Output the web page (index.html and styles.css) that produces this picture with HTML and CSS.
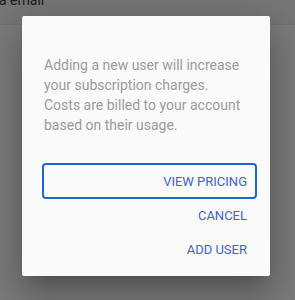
FILE: index.html
```html
<!DOCTYPE html>
<html>
<head>
<meta charset="utf-8">
<link rel="stylesheet" href="styles.css">
</head>
<body>
<div class="page">
  <div class="page-header"><span class="page-title">a email</span></div>
  <div class="page-body"></div>
</div>
<div class="dialog">
  <p class="dialog-text">Adding a new user will increase your subscription charges. Costs are billed to your account based on their usage.</p>
  <div class="actions">
    <button class="btn btn-focused">VIEW PRICING</button>
    <button class="btn btn-cancel">CANCEL</button>
    <button class="btn btn-add">ADD USER</button>
  </div>
</div>
</body>
</html>
```
FILE: styles.css
```css
html, body {
  margin: 0;
  padding: 0;
  width: 295px;
  height: 300px;
  overflow: hidden;
  font-family: Roboto, "Liberation Sans", sans-serif;
}
.page {
  height: 300px;
  display: flex;
  flex-direction: column;
  background: #7b7b7b;
}
.page-header {
  height: 24px;
  background: #767676;
  border-bottom: 1px solid #727272;
  overflow: hidden;
}
.page-title {
  display: block;
  margin-top: -10px;
  margin-left: -1px;
  font-size: 14px;
  line-height: 20px;
  color: #1c1c1c;
}
.page-body {
  flex: 1;
}
.dialog {
  position: absolute;
  left: 22px;
  top: 16px;
  width: 248px;
  height: 260px;
  box-sizing: border-box;
  background: #fafafa;
  border-radius: 2px;
  padding: 39px 13px 0 20px;
  box-shadow: 0 11px 15px -7px rgba(0,0,0,0.2), 0 24px 38px 3px rgba(0,0,0,0.14), 0 9px 46px 8px rgba(0,0,0,0.12);
}
.dialog-text {
  margin: 0 0 28px 2px;
  width: 204px;
  font-size: 14px;
  line-height: 20px;
  color: #9b9b9b;
}
.actions {
  display: flex;
  flex-direction: column;
}
.btn {
  font-family: Roboto, "Liberation Sans", sans-serif;
  font-size: 13px;
  font-weight: 400;
  color: #4262c8;
  background: transparent;
  border: 2px solid transparent;
  border-radius: 4px;
  text-align: right;
  padding: 0 8px;
  box-sizing: border-box;
}
.btn-focused {
  height: 36px;
  border-color: #1f66d4;
}
.btn-cancel {
  height: 34px;
  margin-top: -1px;
}
.btn-add {
  height: 35px;
}
```
